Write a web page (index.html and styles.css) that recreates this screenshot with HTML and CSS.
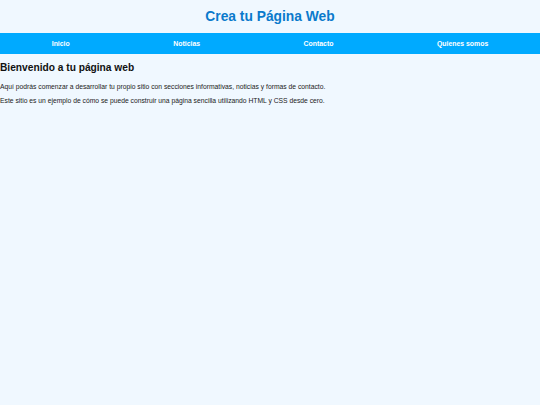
FILE: index.html
```html
<!DOCTYPE html>
<html lang="es">
<head>
<meta charset="utf-8">
<title>Crea tu Página Web</title>
<link rel="stylesheet" href="styles.css">
</head>
<body>
<header class="site-header">
  <h1 class="site-title">Crea tu Página Web</h1>
</header>
<nav class="main-nav">
  <a href="#" class="nav-link">Inicio</a>
  <a href="#" class="nav-link">Noticias</a>
  <a href="#" class="nav-link">Contacto</a>
  <a href="#" class="nav-link">Quienes somos</a>
</nav>
<main class="content">
  <h2 class="content-title">Bienvenido a tu página web</h2>
  <p class="content-text">Aquí podrás comenzar a desarrollar tu propio sitio con secciones informativas, noticias y formas de contacto.</p>
  <p class="content-text">Este sitio es un ejemplo de cómo se puede construir una página sencilla utilizando HTML y CSS desde cero.</p>
</main>
</body>
</html>
```
FILE: styles.css
```css
html, body {
  margin: 0;
  padding: 0;
  background: #f0f8ff;
  font-family: "Liberation Sans", Arial, sans-serif;
}
.site-header {
  height: 33px;
  display: flex;
  align-items: center;
  justify-content: center;
}
.site-title {
  margin: 0;
  font-size: 13.8px;
  font-weight: bold;
  color: #0a7acc;
}
.main-nav {
  background: #00aaff;
  height: 21px;
  display: flex;
  align-items: center;
  justify-content: space-around;
}
.nav-link {
  color: #ffffff;
  text-decoration: none;
  font-size: 6.9px;
  font-weight: bold;
}
.content {
  padding: 8px 0 0 0;
}
.content-title {
  margin: 0 0 9px 0;
  font-size: 10.2px;
  line-height: 12px;
  font-weight: bold;
  color: #111111;
}
.content-text {
  margin: 0 0 6px 0;
  font-size: 6.75px;
  line-height: 8px;
  color: #222222;
}
```
